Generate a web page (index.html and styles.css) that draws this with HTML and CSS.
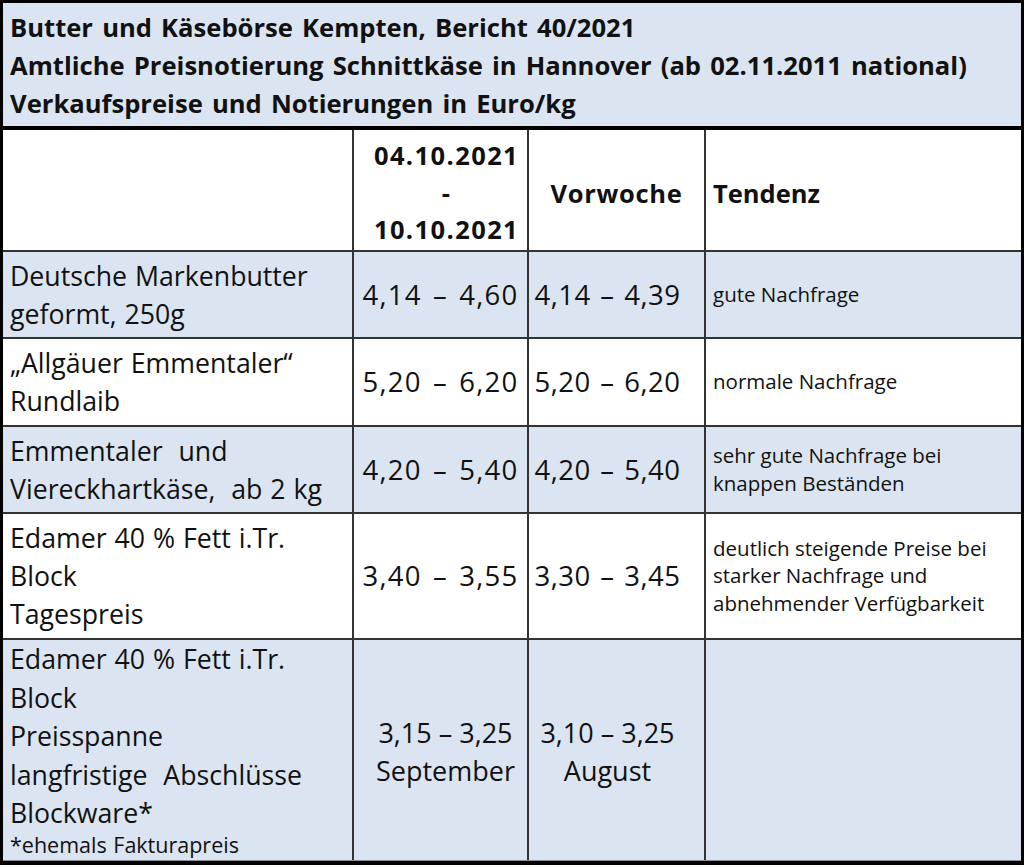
FILE: index.html
```html
<!DOCTYPE html>
<html lang="de">
<head>
<meta charset="utf-8">
<title>Butter und Käsebörse Kempten</title>
<link rel="stylesheet" href="styles.css">
</head>
<body>
<div class="frame">
  <div class="title">
    <div>Butter und Käsebörse Kempten, Bericht 40/2021</div>
    <div>Amtliche Preisnotierung Schnittkäse in Hannover (ab 02.11.2011 national)</div>
    <div>Verkaufspreise und Notierungen in Euro/kg</div>
  </div>
  <div class="grid">
    <div class="cell white"></div>
    <div class="cell white head center dates"><div>04.10.2021</div><div>-</div><div>10.10.2021</div></div>
    <div class="cell white head center week">Vorwoche</div>
    <div class="cell white head tend-head">Tendenz</div>

    <div class="cell blue name"><div>Deutsche Markenbutter</div><div>geformt, 250g</div></div>
    <div class="cell blue val cur center">4,14 – 4,60</div>
    <div class="cell blue val prev center pr">4,14 – 4,39</div>
    <div class="cell blue tend">gute Nachfrage</div>

    <div class="cell white name"><div>„Allgäuer Emmentaler“</div><div>Rundlaib</div></div>
    <div class="cell white val cur center">5,20 – 6,20</div>
    <div class="cell white val prev center pr">5,20 – 6,20</div>
    <div class="cell white tend">normale Nachfrage</div>

    <div class="cell blue name"><div>Emmentaler &nbsp;und</div><div>Viereckhartkäse, &nbsp;ab 2 kg</div></div>
    <div class="cell blue val cur center">4,20 – 5,40</div>
    <div class="cell blue val prev center pr">4,20 – 5,40</div>
    <div class="cell blue tend"><div>sehr gute Nachfrage bei</div><div>knappen Beständen</div></div>

    <div class="cell white name"><div>Edamer 40 % Fett i.Tr.</div><div>Block</div><div>Tagespreis</div></div>
    <div class="cell white val cur center">3,40 – 3,55</div>
    <div class="cell white val prev center pr">3,30 – 3,45</div>
    <div class="cell white tend"><div>deutlich steigende Preise bei</div><div>starker Nachfrage und</div><div>abnehmender Verfügbarkeit</div></div>

    <div class="cell blue name top"><div>Edamer 40 % Fett i.Tr.</div><div>Block</div><div>Preisspanne</div><div>langfristige &nbsp;Abschlüsse</div><div>Blockware*</div><div class="note">*ehemals Fakturapreis</div></div>
    <div class="cell blue val2 center pl"><div>3,15 – 3,25</div><div>September</div></div>
    <div class="cell blue val2 center pr"><div>3,10 – 3,25</div><div>August</div></div>
    <div class="cell blue"></div>
  </div>
</div>
</body>
</html>
```
FILE: styles.css
```css
html, body {
  margin: 0;
  padding: 0;
  background: #000;
}
.frame {
  width: 1024px;
  height: 865px;
  box-sizing: border-box;
  border-style: solid;
  border-color: #000;
  border-width: 3px 3px 4px 3px;
  background: #000;
  font-family: "Open Sans", Lato, sans-serif;
  color: #111;
  display: flex;
  flex-direction: column;
  overflow: hidden;
}
.title {
  height: 127px;
  box-sizing: border-box;
  background: #dbe5f1;
  padding: 6px 0 0 7px;
  font-weight: bold;
  font-size: 25.6px;
  line-height: 38px;
  word-spacing: 2.5px;
  border-bottom: 4px solid #000;
  flex: none;
}
.grid {
  flex: 1;
  min-height: 0;
  display: grid;
  grid-template-columns: 349px 173px 175px 1fr;
  grid-template-rows: 120px 85px 86px 85px 124px minmax(0, 1fr);
  gap: 2px;
  background: #333;
  border-bottom: 1px solid #8a8f99;
}
.cell {
  display: flex;
  flex-direction: column;
  justify-content: center;
  box-sizing: border-box;
  min-height: 0;
  overflow: hidden;
}
.white { background: #fff; }
.blue { background: #dbe5f1; }
.center { align-items: center; text-align: center; }
.pr { padding-right: 18px; }
.pl { padding-left: 10px; }
.head {
  font-weight: bold;
  font-size: 25.5px;
  line-height: 37px;
}
.dates {
  padding-left: 12px;
  padding-top: 4px;
  letter-spacing: 1.4px;
}
.week { letter-spacing: 0.7px; padding-top: 6px; }
.tend-head { padding-left: 7px; padding-top: 6px; }
.name {
  padding-left: 7px;
  font-size: 26.7px;
  line-height: 38px;
  word-spacing: 1px;
}
.name.top {
  justify-content: flex-start;
  padding-top: 0;
  line-height: 38.5px;
}
.note {
  font-size: 21.5px;
  line-height: 23px;
}
.val {
  font-size: 27.5px;
  line-height: 38px;
  letter-spacing: 0.5px;
}
.val.cur { word-spacing: 3px; letter-spacing: 1.2px; }
.val.prev { word-spacing: 2px; }
.val2 {
  font-size: 27px;
  line-height: 38px;
  padding-top: 4px;
}
.tend {
  padding-left: 7px;
  font-size: 20.5px;
  line-height: 27.5px;
}
```
